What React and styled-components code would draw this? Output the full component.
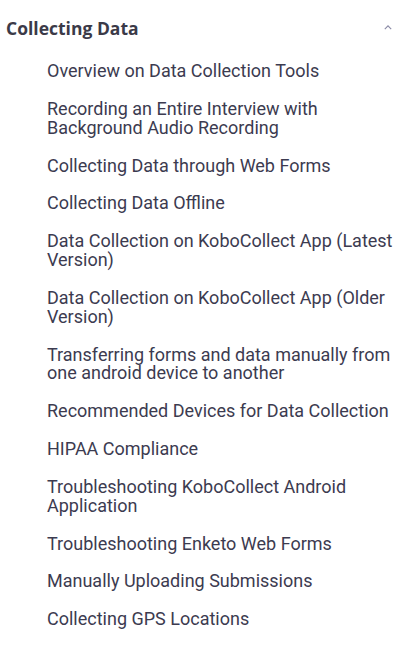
import React from 'react';
import styled, { createGlobalStyle } from 'styled-components';

const GlobalStyle = createGlobalStyle`
    body{
        margin: 0;
        background: #ffffff;
    }
`

const items = [
    'Overview on Data Collection Tools',
    'Recording an Entire Interview with Background Audio Recording',
    'Collecting Data through Web Forms',
    'Collecting Data Offline',
    'Data Collection on KoboCollect App (Latest Version)',
    'Data Collection on KoboCollect App (Older Version)',
    'Transferring forms and data manually from one android device to another',
    'Recommended Devices for Data Collection',
    'HIPAA Compliance',
    'Troubleshooting KoboCollect Android Application',
    'Troubleshooting Enketo Web Forms',
    'Manually Uploading Submissions',
    'Collecting GPS Locations',
];

const App = () => {
    return (
        <>
            <GlobalStyle />
            <Section>
                <SectionHeader>
                    <h2>Collecting Data</h2>
                    <Chevron viewBox="0 0 10 6" aria-hidden="true">
                        <path d="M1 5 L5 1 L9 5" />
                    </Chevron>
                </SectionHeader>
                <ArticleList>
                    {items.map(item => (
                        <li key={item}>
                            <a href="#">{item}</a>
                        </li>
                    ))}
                </ArticleList>
            </Section>
        </>
    )
}

const Section = styled.nav`
    width: 412px;
    padding-top: 16px;
`
const SectionHeader = styled.div`
    display: flex;
    align-items: center;
    justify-content: space-between;
    padding: 0 20px 0 6px;
    h2{
        margin: 0;
        font-family: "Open Sans", sans-serif;
        font-weight: 700;
        font-size: 17.5px;
        line-height: 25px;
        color: #3b3a48;
    }
`
const Chevron = styled.svg`
    width: 8px;
    height: 5px;
    margin-top: -3px;
    fill: none;
    stroke: #8b8ba6;
    stroke-width: 1.4;
`
const ArticleList = styled.ul`
    list-style: none;
    margin: 0;
    padding: 21px 10px 0 47px;
    display: flex;
    flex-direction: column;
    gap: 18.9px;
    a{
        display: block;
        font-family: Roboto, sans-serif;
        font-size: 18px;
        line-height: 18.9px;
        color: #3c3b50;
        text-decoration: none;
    }
`
export default App;
